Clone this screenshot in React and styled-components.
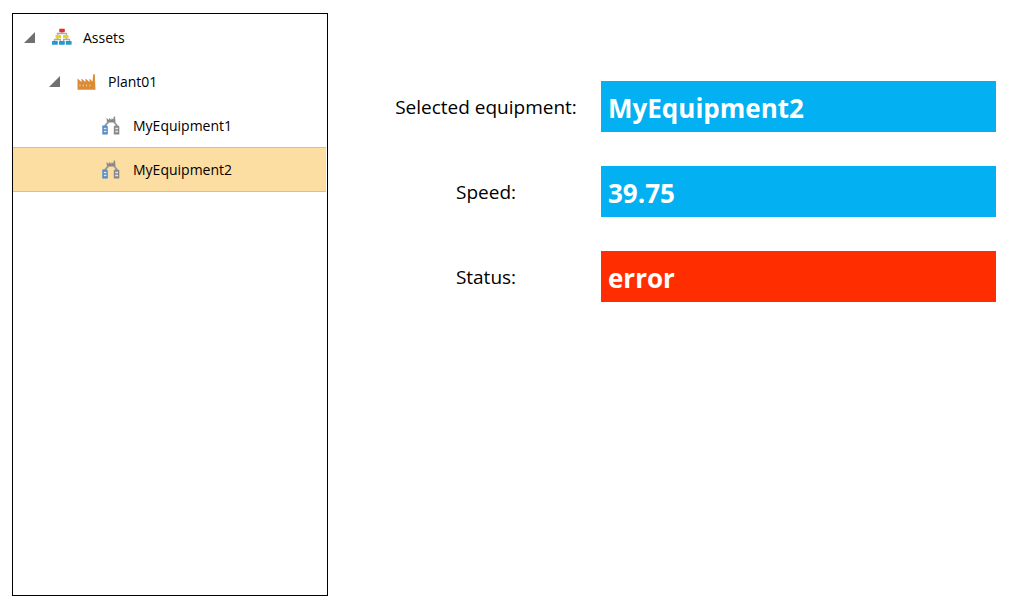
import React, { useState } from "react";
import styled, { createGlobalStyle } from "styled-components";

const GlobalStyle = createGlobalStyle`
  * { box-sizing: border-box; }
  body {
    margin: 0;
    background: #fff;
    color: #000;
    font-family: "Segoe UI", "Open Sans", "Noto Sans", sans-serif;
  }
`;

const Page = styled.div`
  display: flex;
  gap: 58px;
  min-height: 100vh;
  padding: 13px 15px 11px 12px;
`;

const TreePanel = styled.nav`
  flex: 0 0 316px;
  padding-top: 1px;
  border: 1px solid #000;
`;

const TreeList = styled.ul`
  margin: 0;
  padding: 0;
  list-style: none;
`;

const TreeRow = styled.div`
  display: flex;
  align-items: center;
  height: 45px;
  margin: 0 1px -1px 0;
  padding-left: ${(p) => 10 + p.$level * 25}px;
  border: solid ${(p) => (p.$selected ? "#f6c435" : "transparent")};
  border-width: 1px 0;
  background: ${(p) => (p.$selected ? "#fcdda2" : "transparent")};
`;

const Toggle = styled.button`
  display: flex;
  width: 13px;
  margin-right: 16px;
  padding: 0;
  border: 0;
  background: none;
`;

const ToggleSpace = styled.span`
  width: 13px;
  margin-right: 16px;
`;

const ItemButton = styled.button`
  display: flex;
  align-items: center;
  gap: 11px;
  padding: 0;
  border: 0;
  background: none;
  color: inherit;
  font: 14px/20px "Segoe UI", "Open Sans", "Noto Sans", sans-serif;
  white-space: nowrap;
`;

const Details = styled.main`
  flex: 1;
  min-width: 0;
  display: flex;
  flex-direction: column;
  gap: 34px;
  padding-top: 68px;
`;

const Field = styled.div`
  display: grid;
  grid-template-columns: 200px minmax(0, 1fr);
  column-gap: 15px;
  align-items: center;
`;

const FieldLabel = styled.label`
  font-size: 19px;
  line-height: 26px;
  text-align: center;
  white-space: nowrap;
`;

const FieldValue = styled.output`
  height: 51px;
  padding: 3px 7px 0;
  overflow: hidden;
  background: ${(p) => (p.$alarm ? "#ff2d00" : "#03b0f1")};
  color: #fff;
  font-size: 26px;
  font-weight: 700;
  line-height: 49px;
`;

const Arrow = () => (
  <svg width="13" height="12" viewBox="0 0 13 12" aria-hidden="true">
    <path d="M12 0V11H1Z" fill="#707070" />
  </svg>
);

const AssetsIcon = () => (
  <svg width="20" height="20" viewBox="0 0 20 20" aria-hidden="true">
    <path d="M10 4V5.500M5.500 8V5.500H14.500V8M5.500 10V11.500M2.500 14V11.500H8.500V14M14.500 10V11.500M11.500 14V11.500H17.500V14" fill="none" stroke="#aaa" strokeWidth="1.300" />
    <rect x="7.300" y="0.700" width="5.500" height="3.500" rx="0.600" fill="#e32b31" />
    <rect x="3.500" y="7" width="5.500" height="3.200" rx="0.600" fill="#e5d322" />
    <rect x="11" y="7" width="5.500" height="3.200" rx="0.600" fill="#e5d322" />
    <rect x="0" y="13" width="5.800" height="3.800" rx="0.600" fill="#2199d1" />
    <rect x="7" y="13" width="5.800" height="3.800" rx="0.600" fill="#2199d1" />
    <rect x="13.800" y="13" width="5.800" height="3.800" rx="0.600" fill="#2199d1" />
  </svg>
);

const PlantIcon = () => (
  <svg width="20" height="20" viewBox="0 0 20 20" aria-hidden="true">
    <path d="M0.500 17.700V6.500L4.500 10V6.500L8.500 10V6.500L12.500 10V6.500L15.500 9.500L16.300 2.200H17.800L18.500 17.700Z" fill="#dc8b35" />
    <path d="M3 12.500V14.500M6.300 12.500V14.500M9.600 12.500V14.500M12.900 12.500V14.500" stroke="#f0c695" />
  </svg>
);

const EquipmentIcon = () => (
  <svg width="20" height="20" viewBox="0 0 20 20" aria-hidden="true">
    <path d="M4.500 2L7 4V2L9.500 4V2L11.300 3.500L11.800 0.500H13L13.500 6.500H5Z" fill="#888" />
    <path d="M6.500 6L3.500 9V10M12 6L14.500 9V10" fill="none" stroke="#999" strokeWidth="1.800" />
    <path d="M0.300 9.500H4.500L5.800 10.500V18.500H0.300Z" fill="#5089c5" />
    <path d="M11.800 10.500L13 9.500H16.200L17.300 10.500V18.500H11.800Z" fill="#888" />
    <path d="M1.800 12.500H4.500M1.800 15.500H4.500M13.300 12.500H16M13.300 15.500H16" stroke="#dfe8f0" strokeWidth="1.300" />
  </svg>
);

const icons = { assets: AssetsIcon, plant: PlantIcon, equipment: EquipmentIcon };

const nodes = [
  { name: "Assets", icon: "assets", level: 0, open: true },
  { name: "Plant01", icon: "plant", level: 1, open: true },
  { name: "MyEquipment1", icon: "equipment", level: 2 },
  { name: "MyEquipment2", icon: "equipment", level: 2 },
];

function TreeNode({ node, selected, onSelect }) {
  const Icon = icons[node.icon];
  return (
    <li>
      <TreeRow $level={node.level} $selected={selected}>
        {node.open ? (
          <Toggle type="button" aria-expanded="true" aria-label={node.name}>
            <Arrow />
          </Toggle>
        ) : (
          <ToggleSpace />
        )}
        <ItemButton type="button" aria-pressed={selected} onClick={() => onSelect(node.name)}>
          <Icon />
          {node.name}
        </ItemButton>
      </TreeRow>
    </li>
  );
}

export default function App() {
  const [selected, setSelected] = useState("MyEquipment2");
  const fields = [
    { id: "equipment", label: "Selected equipment:", value: selected },
    { id: "speed", label: "Speed:", value: "39.75" },
    { id: "status", label: "Status:", value: "error", alarm: true },
  ];
  return (
    <>
      <GlobalStyle />
      <Page>
        <TreePanel>
          <TreeList>
            {nodes.map((node) => (
              <TreeNode
                key={node.name}
                node={node}
                selected={node.name === selected}
                onSelect={setSelected}
              />
            ))}
          </TreeList>
        </TreePanel>
        <Details>
          {fields.map((f) => (
            <Field key={f.id}>
              <FieldLabel htmlFor={f.id}>{f.label}</FieldLabel>
              <FieldValue id={f.id} $alarm={f.alarm}>{f.value}</FieldValue>
            </Field>
          ))}
        </Details>
      </Page>
    </>
  );
}
